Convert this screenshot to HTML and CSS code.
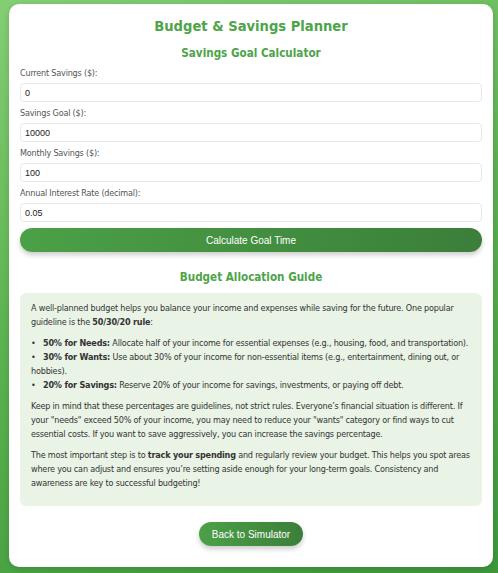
FILE: index.html
```html
<!DOCTYPE html>
<html lang="en">

<head>
    <meta charset="UTF-8">
    <meta name="viewport" content="width=device-width, initial-scale=1.0">
    <title>Budget &amp; Savings Planner</title>
    <link rel="stylesheet" href="styles.css">
</head>

<body>
    <div class="container">
        <h1>Budget &amp; Savings Planner</h1>

        <!-- Savings goal form -->
        <h2>Savings Goal Calculator</h2>
        <form class="goal-form">
            <label for="current">Current Savings ($):</label>
            <input type="text" id="current" value="0">

            <label for="goal">Savings Goal ($):</label>
            <input type="text" id="goal" value="10000">

            <label for="monthly">Monthly Savings ($):</label>
            <input type="text" id="monthly" value="100">

            <label for="rate">Annual Interest Rate (decimal):</label>
            <input type="text" id="rate" value="0.05">

            <button type="button" class="btn btn-wide">Calculate Goal Time</button>
        </form>

        <!-- Budget guide -->
        <h2 class="guide-title">Budget Allocation Guide</h2>
        <div class="guide">
            <p>A well-planned budget helps you balance your income and expenses while saving for the future. One popular guideline is the <strong>50/30/20 rule</strong>:</p>
            <ul>
                <li><strong>50% for Needs:</strong> Allocate half of your income for essential expenses (e.g., housing, food, and transportation).</li>
                <li><strong>30% for Wants:</strong> Use about 30% of your income for non-essential items (e.g., entertainment, dining out, or hobbies).</li>
                <li><strong>20% for Savings:</strong> Reserve 20% of your income for savings, investments, or paying off debt.</li>
            </ul>
            <p>Keep in mind that these percentages are guidelines, not strict rules. Everyone’s financial situation is different. If your "needs" exceed 50% of your income, you may need to reduce your "wants" category or find ways to cut essential costs. If you want to save aggressively, you can increase the savings percentage.</p>
            <p>The most important step is to <strong>track your spending</strong> and regularly review your budget. This helps you spot areas where you can adjust and ensures you’re setting aside enough for your long-term goals. Consistency and awareness are key to successful budgeting!</p>
        </div>

        <div class="back">
            <button type="button" class="btn">Back to Simulator</button>
        </div>
    </div>
</body>

</html>
```

FILE: styles.css
```css
html {
    height: 100%;
}

body {
    margin: 0;
    min-height: 100%;
    padding: 4px 5px 7px 9px;
    box-sizing: border-box;
    background: linear-gradient(160deg, #84ce74 0%, #5cb350 45%, #3d9839 100%);
    font-family: "DejaVu Sans Condensed", "DejaVu Sans", sans-serif;
    color: #333;
}

.container {
    background: #fff;
    border-radius: 10px;
    padding: 12px 11px 21px;
    box-shadow: 0 2px 6px rgba(0, 0, 0, 0.15);
}

h1 {
    margin: 0;
    font-size: 14.6px;
    line-height: 20px;
    text-align: center;
    color: #4da449;
}

h2 {
    margin: 9px 0 6px;
    font-size: 11.6px;
    line-height: 16px;
    text-align: center;
    color: #4da449;
}

.goal-form {
    display: flex;
    flex-direction: column;
}

label {
    font-size: 9px;
    letter-spacing: -0.2px;
    line-height: 12px;
    color: #555;
    margin-bottom: 4px;
}

input {
    font-family: "Liberation Sans", Arial, sans-serif;
    font-size: 9px;
    height: 19px;
    padding: 0 4px;
    border: 1px solid #e8e8e8;
    border-radius: 4px;
    margin: 0 0 5px;
    color: #222;
    box-sizing: border-box;
}

.btn {
    font-family: "Liberation Sans", Arial, sans-serif;
    font-size: 10px;
    color: #fff;
    height: 24px;
    padding: 0 13px;
    border: none;
    border-radius: 12px;
    background: linear-gradient(90deg, #4ca047, #3b7f3a);
    box-shadow: 0 3px 5px rgba(0, 0, 0, 0.2);
}

.btn-wide {
    width: 100%;
    margin-top: 1px;
}

.guide-title {
    margin: 17px 0 8px;
}

.guide {
    background: #e9f4e6;
    border-radius: 6px;
    padding: 8px 11px 9px;
    font-size: 9px;
    letter-spacing: -0.2px;
    line-height: 14px;
    color: #333;
}

.guide p {
    margin: 0 0 7px;
}

.guide ul {
    margin: 0 0 7px;
    padding: 0;
    list-style: none;
}

.guide li::before {
    content: "•";
    display: inline-block;
    width: 12px;
}

.back {
    text-align: center;
    margin-top: 16px;
}
```
